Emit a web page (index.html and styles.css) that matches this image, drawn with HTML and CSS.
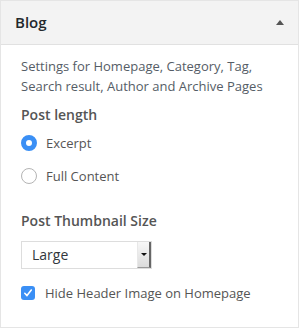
FILE: index.html
```html
<!DOCTYPE html>
<html>
<head>
<meta charset="utf-8">
<link rel="stylesheet" href="styles.css">
</head>
<body>
<div class="panel">
  <div class="panel-head">
    <h3 class="panel-title">Blog</h3>
    <span class="toggle"></span>
  </div>
  <div class="panel-body">
    <p class="desc">Settings for Homepage, Category, Tag, Search result, Author and Archive Pages</p>
    <div class="field">
      <div class="label">Post length</div>
      <label class="choice"><span class="radio checked"></span>Excerpt</label>
      <label class="choice"><span class="radio"></span>Full Content</label>
    </div>
    <div class="field field-thumb">
      <div class="label">Post Thumbnail Size</div>
      <div class="select"><span class="select-val">Large</span><span class="select-btn"><span class="caret"></span></span></div>
    </div>
    <label class="check-row"><span class="checkbox"><svg width="10" height="10" viewBox="0 0 10 10"><path d="M1.8 5.3 L4 7.6 L8.3 2" fill="none" stroke="#fff" stroke-width="1.6" stroke-linecap="round" stroke-linejoin="round"/></svg></span>Hide Header Image on Homepage</label>
  </div>
</div>
</body>
</html>
```

FILE: styles.css
```css
* { box-sizing: border-box; }
html, body { margin: 0; padding: 0; background: #fff; }
body { font-family: "Open Sans", "Noto Sans", sans-serif; width: 300px; }
.panel {
  width: 299px;
  height: 328px;
  border: 1px solid #e5e5e5;
  background: #fff;
}
.panel-head {
  display: flex;
  align-items: center;
  justify-content: space-between;
  background: #f3f3f3;
  border-bottom: 1px solid #e1e1e1;
  padding: 10px 14px 11px 14px;
  height: 44px;
}
.panel-title {
  margin: 0;
  font-size: 15px;
  line-height: 21px;
  font-weight: 600;
  color: #23282d;
}
.toggle {
  width: 0; height: 0;
  border-left: 4px solid transparent;
  border-right: 4px solid transparent;
  border-bottom: 5px solid #555;
}
.panel-body { padding: 0 20px; }
.desc {
  margin: 12px 0 0 0;
  font-size: 13px;
  line-height: 19.5px;
  color: #555d66;
}
.field { margin-top: 9px; }
.label {
  font-size: 14px;
  font-weight: 600;
  line-height: 20px;
  color: #555;
}
.choice {
  display: flex;
  align-items: center;
  gap: 9px;
  font-size: 13px;
  line-height: 20px;
  color: #555;
  height: 33px;
}
.choice:first-of-type { margin-top: 1px; }
.radio {
  width: 16px; height: 16px;
  border-radius: 50%;
  border: 1px solid #b4b4b4;
  background: #fff;
  flex: none;
}
.radio.checked {
  border: 5px solid #3a8ff5;
  background: #fff;
}
.field-thumb { margin-top: 19px; }
.select {
  margin-top: 10px;
  width: 131px;
  height: 28px;
  border: 1px solid #ddd;
  display: flex;
  align-items: stretch;
  background: #fff;
}
.select-val {
  flex: 1;
  font-size: 14px;
  line-height: 26px;
  padding-left: 10px;
  color: #32373c;
}
.select-btn {
  width: 14px;
  background: linear-gradient(#f7f7f7, #dcdcdc);
  border-left: 1px solid #e8e8e8;
  border-right: 2px solid #666;
  border-bottom: 1px solid #999;
  display: flex;
  align-items: center;
  justify-content: center;
}
.caret {
  width: 0; height: 0;
  border-left: 3px solid transparent;
  border-right: 3px solid transparent;
  border-top: 3px solid #111;
}
.check-row {
  display: flex;
  align-items: center;
  gap: 10px;
  margin-top: 14px;
  font-size: 13px;
  line-height: 20px;
  color: #555;
}
.checkbox {
  width: 14px; height: 14px;
  border-radius: 3px;
  background: #3a8ff5;
  flex: none;
  display: flex;
  align-items: center;
  justify-content: center;
}
```
